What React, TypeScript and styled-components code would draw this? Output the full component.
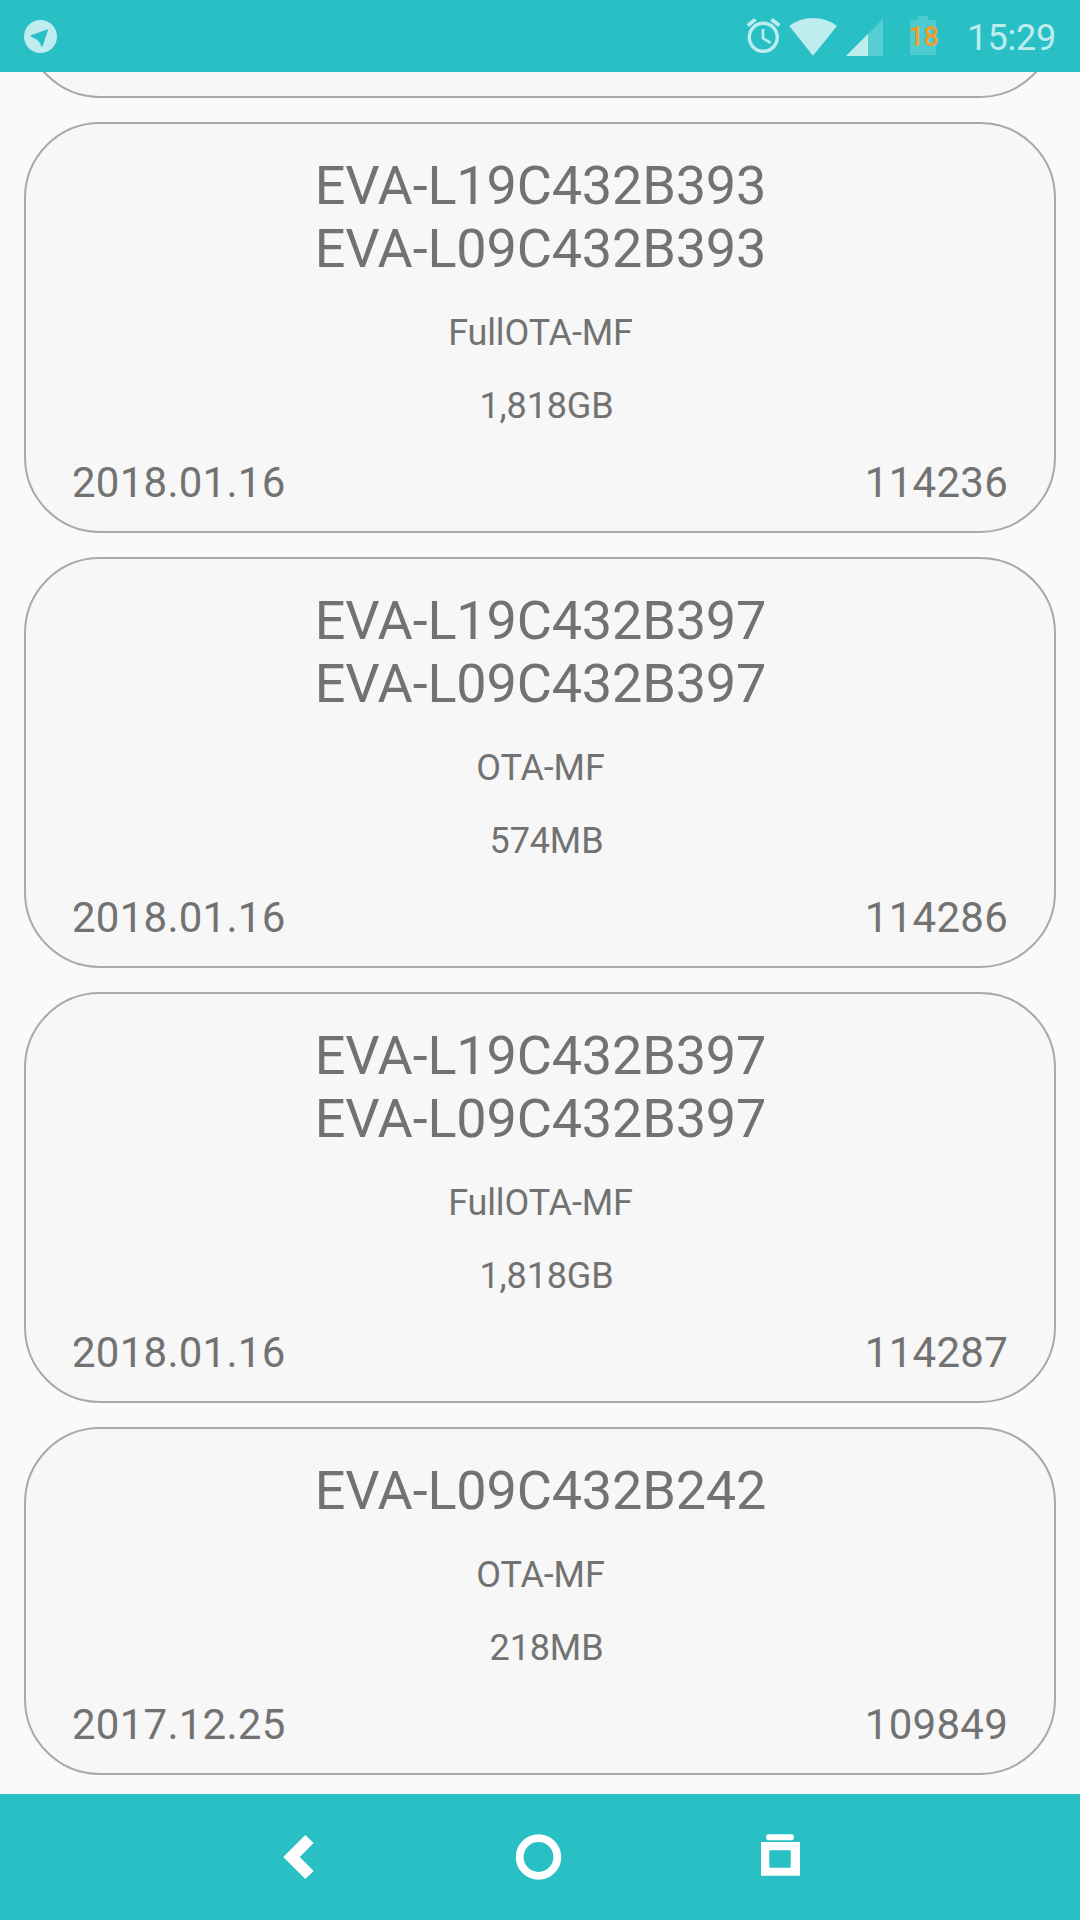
import React from "react";
import styled, { createGlobalStyle } from "styled-components";

const TEAL = "#28bfc5";
const SOFT = "#bfecee";

const GlobalStyle = createGlobalStyle`
  *, *::before, *::after { box-sizing: border-box; }
  body {
    margin: 0;
    background: #fafafa;
    font-family: Roboto, "Liberation Sans", sans-serif;
  }
  svg { display: block; flex: none; }
`;

const Screen = styled.div`
  display: flex;
  flex-direction: column;
  width: 1080px;
  height: 1920px;
  overflow: hidden;
  background: #fafafa;
`;

const StatusBar = styled.header`
  display: flex;
  flex: none;
  align-items: center;
  justify-content: space-between;
  height: 72px;
  padding: 0 24px;
  background: ${TEAL};
  color: ${SOFT};
`;

const StatusIcons = styled.div`
  display: flex;
  align-items: center;
  height: 72px;
`;

const Spacer = styled.span<{ $w: number }>`
  flex: none;
  width: ${(p) => p.$w}px;
`;

const Battery = styled.div`
  display: grid;
  grid-template-columns: 27px;
  width: 27px;
  height: 72px;
  > * { grid-area: 1 / 1; }
`;

const BatteryLevel = styled.span`
  justify-self: center;
  margin: 0 -4px;
  padding-top: 21px;
  font-size: 27px;
  font-weight: 500;
  line-height: 32px;
  letter-spacing: -0.3px;
  color: #f79b25;
`;

const Clock = styled.span`
  width: 90px;
  padding-top: 4px;
  font-size: 36px;
  line-height: 42px;
  letter-spacing: -0.2px;
  text-align: right;
`;

const List = styled.main`
  display: flex;
  flex: 1;
  flex-direction: column;
  justify-content: flex-end;
  gap: 24px;
  min-height: 0;
  padding: 0 24px 19px;
  overflow: hidden;
`;

const Card = styled.article<{ $height: number }>`
  display: flex;
  flex: none;
  flex-direction: column;
  align-items: center;
  height: ${(p) => p.$height}px;
  padding: 30px 46px 0;
  border: 2px solid #a9a9a9;
  border-radius: 76px;
  background: #f7f7f7;
  color: #727272;
`;

const Title = styled.h2`
  margin: 0;
  padding-left: 1px;
  font-size: 54px;
  font-weight: 400;
  line-height: 63px;
  letter-spacing: -0.17px;
  text-align: center;
`;

const Detail = styled.p<{ $gap: number; $indent: number }>`
  margin: ${(p) => p.$gap}px 0 0;
  padding-left: ${(p) => p.$indent}px;
  font-size: 36px;
  line-height: 42px;
  letter-spacing: -0.13px;
`;

const Footer = styled.footer`
  display: flex;
  justify-content: space-between;
  width: 100%;
  margin-top: 31px;
  font-size: 42px;
  line-height: 49px;
  letter-spacing: 0.25px;
`;

const NavBar = styled.nav`
  display: flex;
  flex: none;
  align-items: center;
  justify-content: center;
  gap: 193px;
  height: 126px;
  background: ${TEAL};
`;

interface Firmware {
  models: string[];
  type: string;
  size: string;
  date: string;
  id: string;
}

const items: Firmware[] = [
  { models: ["EVA-L19C432B393", "EVA-L09C432B393"], type: "FullOTA-MF", size: "1,818GB", date: "2018.01.16", id: "114236" },
  { models: ["EVA-L19C432B397", "EVA-L09C432B397"], type: "OTA-MF", size: "574MB", date: "2018.01.16", id: "114286" },
  { models: ["EVA-L19C432B397", "EVA-L09C432B397"], type: "FullOTA-MF", size: "1,818GB", date: "2018.01.16", id: "114287" },
  { models: ["EVA-L09C432B242"], type: "OTA-MF", size: "218MB", date: "2017.12.25", id: "109849" },
];

const TelegramIcon = () => (
  <svg width="33" height="72" viewBox="24 0 33 72">
    <circle cx="40.5" cy="36.5" r="16.5" fill={SOFT} />
    <path d="M31 35.3 L48.4 29 L42.6 46.2 Q41.8 47.4 41.2 46 Q39.6 42.2 37.4 40 L31.3 36.7 Q30.3 35.8 31 35.3Z" fill={TEAL} />
  </svg>
);

const AlarmIcon = () => (
  <svg width="35" height="72" viewBox="746 0 35 72" fill="none" stroke={SOFT}>
    <circle cx="763.3" cy="37.3" r="14" strokeWidth="3.4" />
    <path d="M763 29V38.3L770.6 42.8" strokeWidth="2.6" />
    <path d="M747.8 25.6L755.4 19.4M771.4 19.4L779.4 25.6" strokeWidth="3.8" />
  </svg>
);

const WifiIcon = () => (
  <svg width="48" height="72" viewBox="789 0 48 72">
    <path d="M789.3 26 Q799.5 18 813 18 Q826.5 18 837 26 L813 55.7Z" fill={SOFT} />
  </svg>
);

const SignalIcon = () => (
  <svg width="37" height="72" viewBox="846 0 37 72">
    <path d="M846 56L883 19V56Z" fill="#56cdd2" />
    <path d="M846 56L868 34V56Z" fill={SOFT} />
  </svg>
);

const BatteryIcon = () => (
  <svg width="27" height="72" viewBox="910 0 27 72">
    <path d="M910 20H918V16H928V20H936V55H910Z" fill="#4dcbd0" />
  </svg>
);

const BackIcon = () => (
  <svg width="48" height="48" viewBox="275 1833 48 48">
    <path d="M283.3 1857L305.3 1835L313.6 1843L299.8 1857L313.6 1871L305.3 1879Z" fill="#fff" />
  </svg>
);

const HomeIcon = () => (
  <svg width="48" height="48" viewBox="516 1833 48 48">
    <circle cx="538.5" cy="1857" r="18.8" fill="none" stroke="#fff" strokeWidth="7.8" />
  </svg>
);

const RecentsIcon = () => (
  <svg width="48" height="48" viewBox="757 1833 48 48">
    <rect x="766" y="1834.2" width="28" height="6" rx="3" fill="#fff" />
    <path fillRule="evenodd" d="M761 1842H800V1875.7H761ZM769.3 1850.3V1867.7H790.7V1850.3Z" fill="#fff" />
  </svg>
);

export default function App() {
  return (
    <Screen>
      <GlobalStyle />
      <StatusBar>
        <TelegramIcon />
        <StatusIcons>
          <AlarmIcon />
          <Spacer $w={8} />
          <WifiIcon />
          <Spacer $w={9} />
          <SignalIcon />
          <Spacer $w={27} />
          <Battery>
            <BatteryIcon />
            <BatteryLevel>18</BatteryLevel>
          </Battery>
          <Spacer $w={29} />
          <Clock>15:29</Clock>
        </StatusIcons>
      </StatusBar>
      <List>
        <Card $height={411} />
        {items.map((item) => (
          <Card key={item.id} $height={285 + item.models.length * 63}>
            <Title>
              {item.models.map((model) => (
                <div key={model}>{model}</div>
              ))}
            </Title>
            <Detail $gap={32} $indent={1}>{item.type}</Detail>
            <Detail $gap={31} $indent={13}>{item.size}</Detail>
            <Footer>
              <span>{item.date}</span>
              <span>{item.id}</span>
            </Footer>
          </Card>
        ))}
      </List>
      <NavBar>
        <BackIcon />
        <HomeIcon />
        <RecentsIcon />
      </NavBar>
    </Screen>
  );
}
